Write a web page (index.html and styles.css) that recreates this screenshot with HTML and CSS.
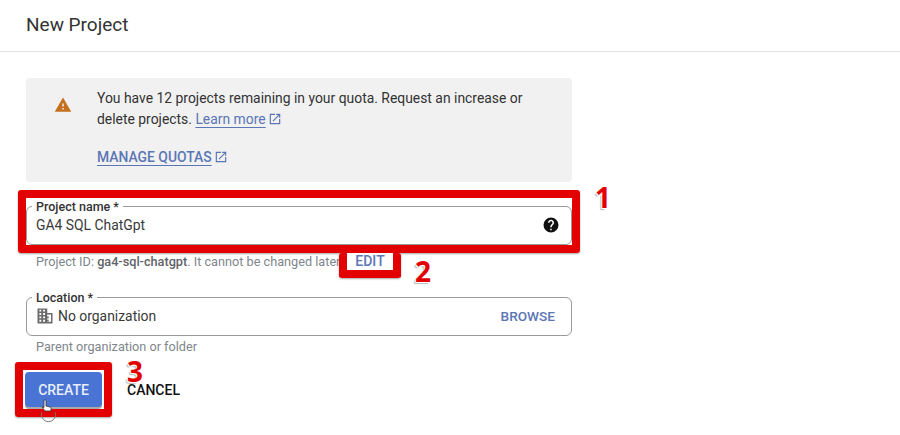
FILE: index.html
```html
<!DOCTYPE html>
<html lang="en">
<head>
<meta charset="utf-8">
<title>New Project</title>
<link rel="stylesheet" href="styles.css">
</head>
<body>
<header class="topbar"><h1 class="title">New Project</h1></header>
<main class="form">
  <section class="notice">
    <svg class="warn" width="18" height="18" viewBox="0 0 24 24"><path fill="#c5701f" d="M1 21h22L12 2 1 21zm12-3h-2v-2h2v2zm0-4h-2v-4h2v4z"/></svg>
    <div class="notice-body">
      <p class="notice-text">You have 12 projects remaining in your quota. Request an increase or delete projects. <a class="link" href="#">Learn more</a><svg class="ext" width="14" height="14" viewBox="0 0 24 24"><path fill="#5b76b5" d="M19 19H5V5h7V3H3v18h18v-9h-2v7zM14 3v2h3.6l-9.8 9.8 1.4 1.4L19 6.4V10h2V3h-7z"/></svg></p>
      <p class="manage"><a class="link strong" href="#">MANAGE QUOTAS</a><svg class="ext" width="14" height="14" viewBox="0 0 24 24"><path fill="#5b76b5" d="M19 19H5V5h7V3H3v18h18v-9h-2v7zM14 3v2h3.6l-9.8 9.8 1.4 1.4L19 6.4V10h2V3h-7z"/></svg></p>
    </div>
  </section>

  <fieldset class="field field-name">
    <legend class="legend">Project name *</legend>
    <div class="field-row">
      <span class="value">GA4 SQL ChatGpt</span>
      <svg class="help" width="18" height="18" viewBox="0 0 24 24"><path fill="#111" d="M12 2a10 10 0 1 0 0 20 10 10 0 0 0 0-20zm1 17h-2v-2h2v2zm2.070-7.750-.9.92C13.450 12.900 13 13.500 13 15h-2v-.5c0-1.100.45-2.100 1.170-2.830l1.240-1.260c.37-.36.59-.86.59-1.410 0-1.100-.9-2-2-2s-2 .9-2 2H8c0-2.210 1.790-4 4-4s4 1.790 4 4c0 .88-.36 1.680-.93 2.250z"/></svg>
    </div>
  </fieldset>
  <p class="hint hint-name">Project ID: <b class="mid">ga4-sql-chatgpt</b>. It cannot be changed later.<span class="edit">EDIT</span></p>

  <fieldset class="field field-loc">
    <legend class="legend">Location *</legend>
    <div class="field-row">
      <svg class="org" width="18" height="18" viewBox="0 0 24 24"><path fill="#6b6b6b" d="M2 22V2h13v6h7v14H2zm2.500-2.500h2.500v-2.500H4.500v2.500zm0-4.500h2.500v-2.500H4.500V15zm0-4.500h2.500V8H4.500v2.500zm0-4.500h2.500V3.500H4.500V6zm5 13.500h2.500v-2.500H9.500v2.500zm0-4.500h2.500v-2.500H9.500V15zm0-4.500h2.500V8H9.500v2.500zm0-4.500h2.500V3.500H9.500V6zM15 19.500h5V10h-5v2.500h2V15h-2v2h2v2h-2v.5z"/></svg>
      <span class="value">No organization</span>
      <span class="browse">BROWSE</span>
    </div>
  </fieldset>
  <p class="hint hint-loc">Parent organization or folder</p>

  <div class="actions">
    <button class="create" type="button">CREATE</button>
    <button class="cancel" type="button">CANCEL</button>
  </div>
</main>

<div class="mark mark-name"></div>
<div class="mark mark-edit"></div>
<div class="mark mark-create"></div>
<span class="num num-1">1</span>
<span class="num num-2">2</span>
<span class="num num-3">3</span>
<svg class="pointer" width="24" height="34" viewBox="0 0 24 34">
  <path fill="none" stroke="#777" d="M3 14a7 7 0 1 0 13 0"/>
  <path fill="#fff" stroke="#333" stroke-width=".8" d="M5 2.500c1-1 2-.5 2 .5v5l4 1c1 .3 1 1 1 2v2H6l-3-4 2 .5z"/>
</svg>
</body>
</html>
```
FILE: styles.css
```css
* { box-sizing: border-box; }
html, body { margin: 0; height: 435px; overflow: hidden; background: #fff; }
body { position: relative; font-family: Roboto, "Liberation Sans", sans-serif; color: #202124; }

.topbar { height: 52px; border-bottom: 1px solid #e3e3e3; padding: 13px 26px 0; }
.title { margin: 0; font-size: 19px; line-height: 24px; font-weight: 400; color: #333; }

.form { width: 572px; padding: 26px 0 0 26px; }

.notice { display: flex; height: 104px; background: #f1f1f2; border-radius: 4px; padding: 10px 40px 0 28px; }
.warn { flex: none; margin: 8px 25px 0 0; }
.notice-body { flex: 1; }
.notice-text { margin: 0; font-size: 13.900px; line-height: 21px; color: #333; }
.manage { margin: 17px 0 0; font-size: 13.900px; line-height: 21px; }
.link { color: #5b76b5; text-decoration: underline; text-underline-offset: 3px; text-decoration-thickness: 1px; }
.strong { font-weight: 500; }
.ext { margin-left: 2px; vertical-align: -2px; }

.field { margin: 0; padding: 0 12px 0 5px; min-width: 0; border: 1px solid #999; border-radius: 6px; }
.field-name { margin-top: 16px; height: 47px; }
.field-loc { margin-top: 19px; height: 47px; }
.legend { padding: 0 4px; font-size: 12.500px; line-height: 17px; font-weight: 500; color: #333; }
.field-row { display: flex; align-items: center; height: 20px; padding-left: 4px; font-size: 13.900px; color: #3a3a3a; }
.value { flex: 1; }
.help { flex: none; margin-right: -1px; }
.org { flex: none; margin-right: 4px; }
.browse { font-size: 13.600px; font-weight: 500; color: #5b76b5; margin-right: 4px; }

.hint { margin: 0; font-size: 12.700px; line-height: 16px; color: #80868b; }
.hint-name { margin-top: 9px; padding-left: 10px; white-space: nowrap; }
.hint-loc { margin-top: 3px; padding-left: 10px; }
.mid { font-weight: 500; color: #5f6368; }
.edit { position: absolute; left: 347px; top: 253px; width: 46px; height: 16px; background: #fff; color: #5b76b5; font-size: 14px; line-height: 17px; font-weight: 500; text-align: center; z-index: 2; }

.actions { display: flex; align-items: center; gap: 25px; margin-top: 17px; margin-left: -1px; }
.create { width: 77px; height: 35px; border: 0; border-radius: 4px; background: #4a74d4; color: #e8eefb; font: 500 14px Roboto, sans-serif; box-shadow: 0 2px 0 #aaa; }
.cancel { padding: 0; border: 0; background: none; color: #111; font: 500 14px Roboto, sans-serif; }

.mark { position: absolute; border: 8px solid #e30000; border-radius: 3px; box-shadow: 0 1px 2px rgba(0,0,0,.35); }
.mark-name { left: 18px; top: 190px; width: 562px; height: 63px; }
.mark-edit { left: 339px; top: 253px; width: 62px; height: 25px; border-top: 0; z-index: 1; }
.mark-create { left: 15px; top: 362px; width: 97px; height: 55px; }

.num { position: absolute; font: 700 28px/22px "Open Sans", sans-serif; color: #e30000; text-shadow: -1px 1px 0 #fff, 1px 1px 0 #fff, -2px 2px 1px #bbb; }
.num-1 { left: 595px; top: 186px; }
.num-2 { left: 415px; top: 260px; }
.num-3 { left: 127px; top: 360px; }

.pointer { position: absolute; left: 39px; top: 398px; }
```
